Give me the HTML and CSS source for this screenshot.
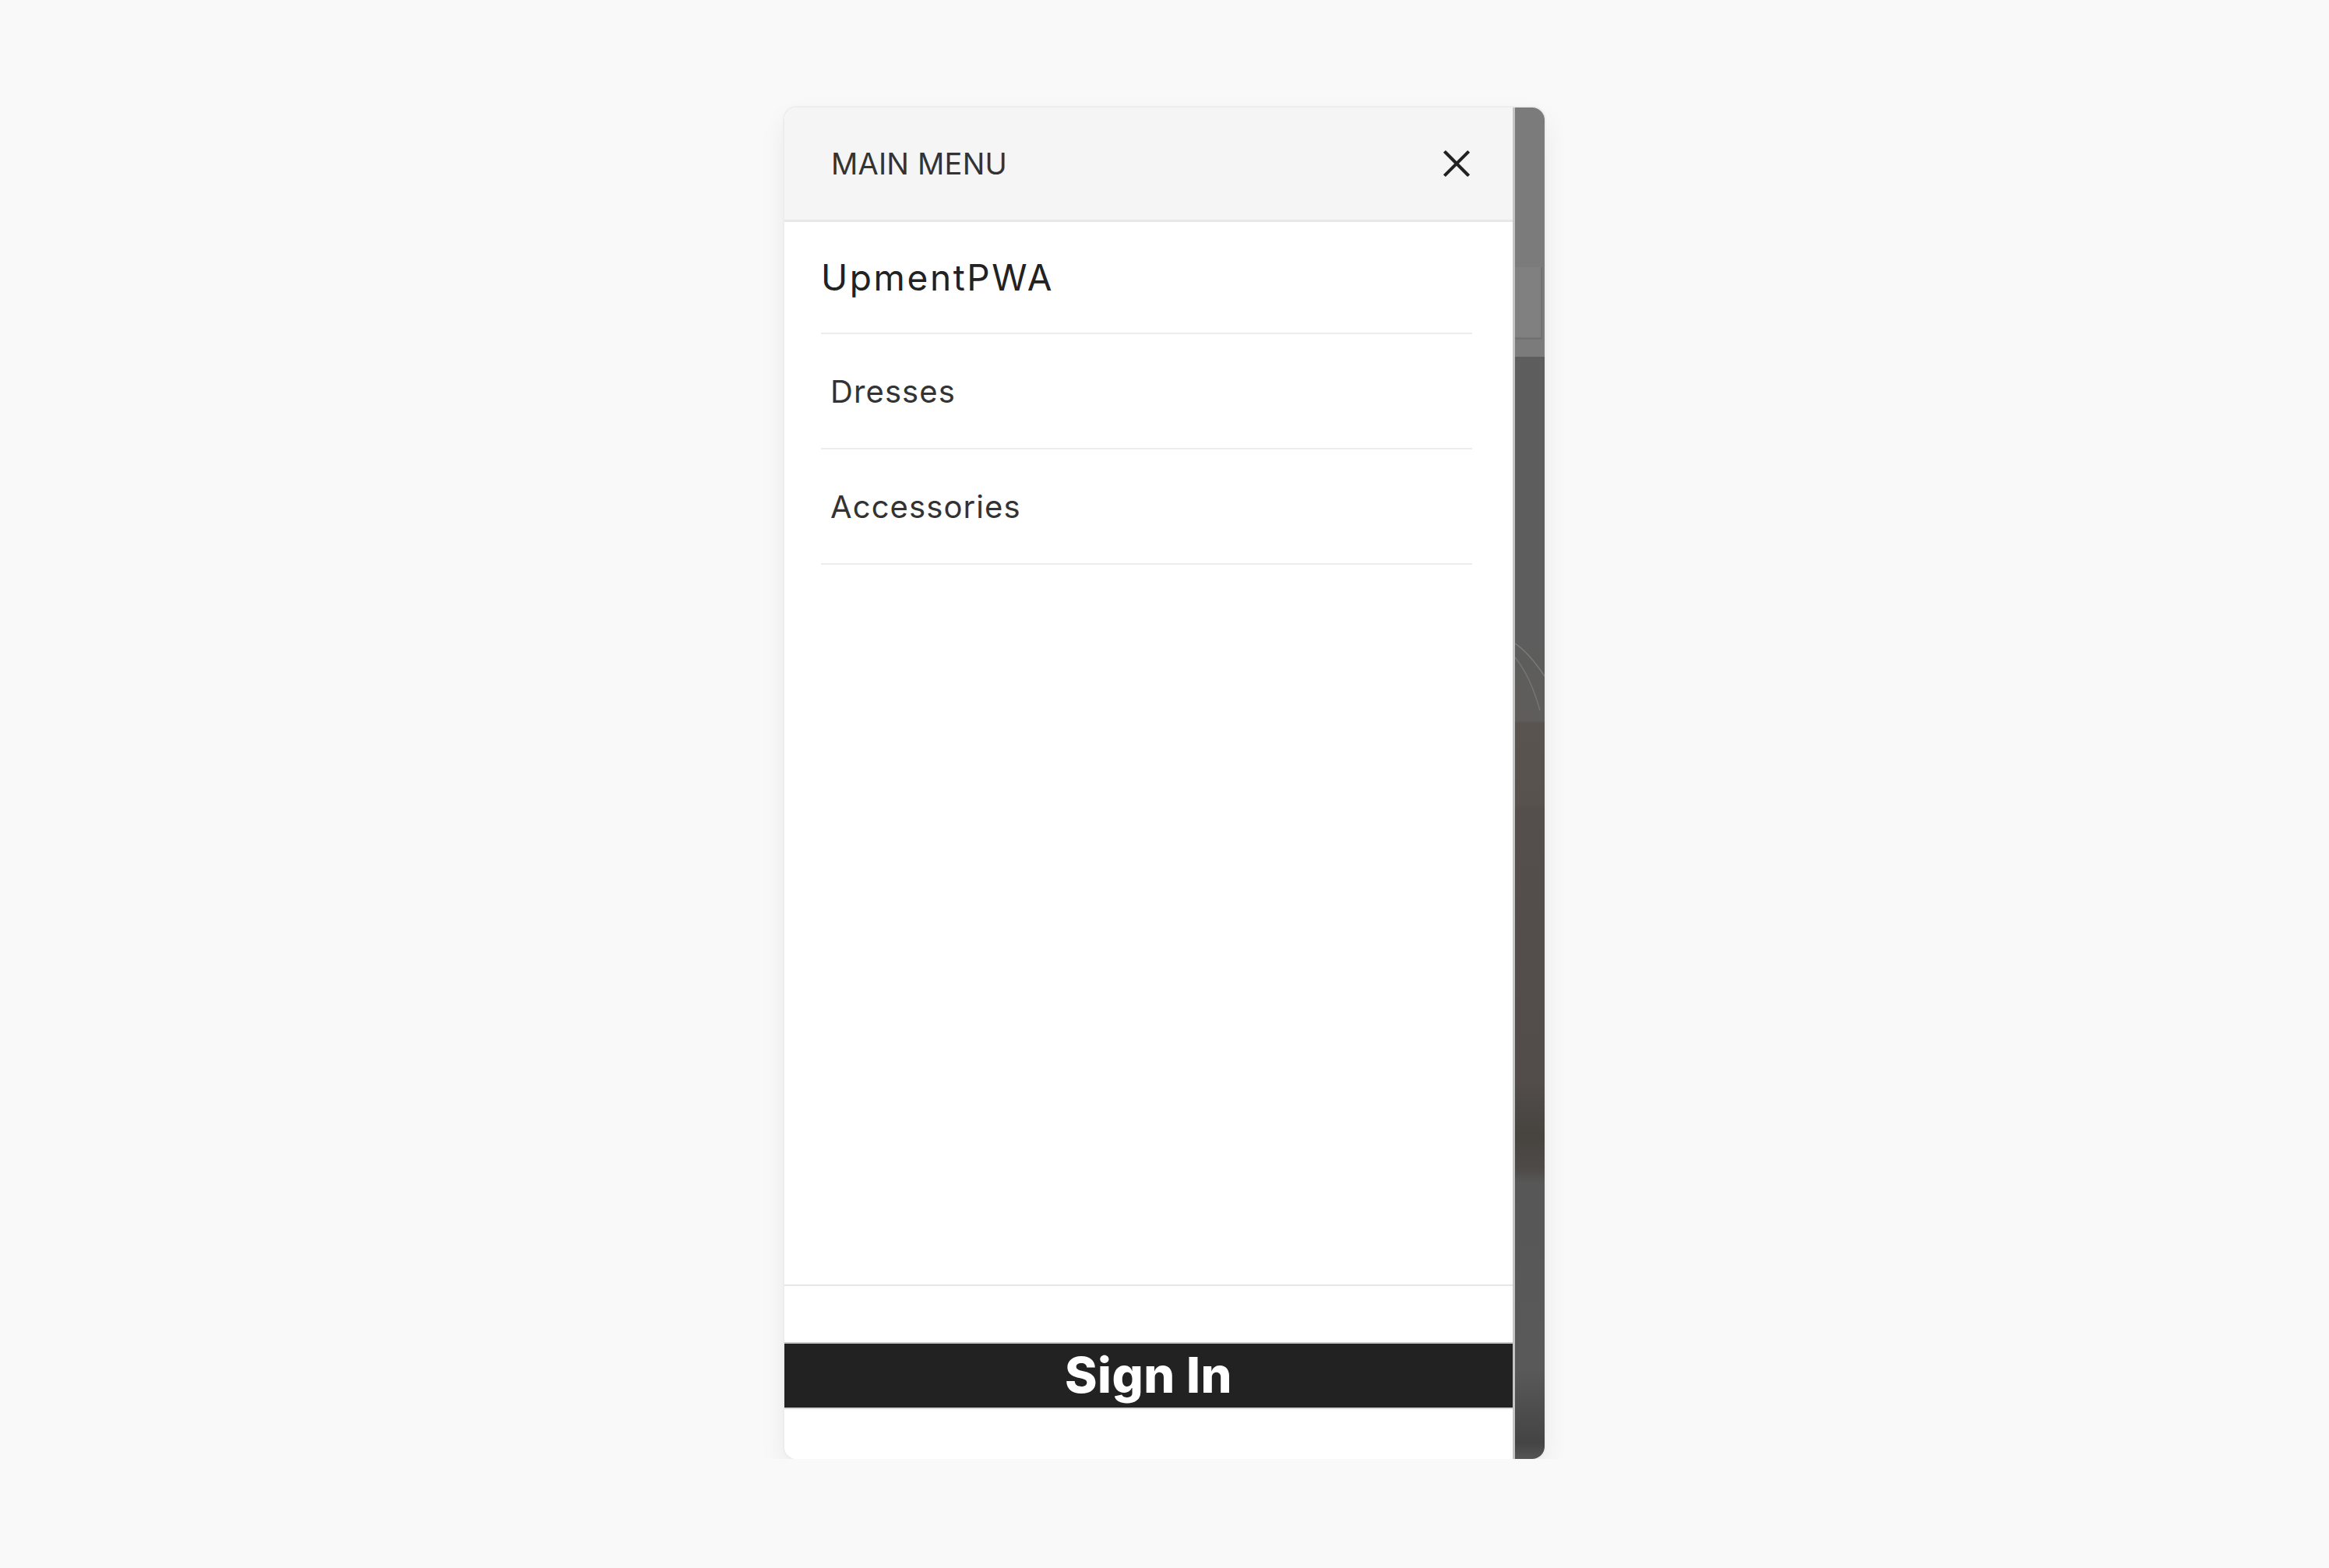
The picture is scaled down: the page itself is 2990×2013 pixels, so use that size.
FILE: index.html
```html
<!DOCTYPE html>
<html lang="en">
<head>
    <meta charset="UTF-8">
    <meta name="viewport" content="width=device-width, initial-scale=1.0">
    <title>UpmentPWA - Menu</title>
    <link rel="stylesheet" href="styles.css">
</head>
<body>

    <div class="screen">

        <aside class="drawer">

            <header class="drawer-head">
                <span class="drawer-title">MAIN MENU</span>
                <button class="close" aria-label="Close">
                    <svg viewBox="0 0 24 24" width="40" height="40">
                        <path d="M3.5 3.5 L20.5 20.5 M20.5 3.5 L3.5 20.5" stroke="#222" stroke-width="2.5" fill="none" stroke-linecap="square"/>
                    </svg>
                </button>
            </header>

            <nav class="drawer-nav">
                <div class="store">UpmentPWA</div>
                <a class="category" href="#">Dresses</a>
                <a class="category" href="#">Accessories</a>
            </nav>

            <footer class="drawer-foot">
                <button class="sign-in">Sign In</button>
            </footer>

        </aside>

        <!-- page behind the drawer, dimmed -->
        <div class="backdrop">
            <div class="bd-header">
                <div class="bd-search"></div>
            </div>
            <div class="bd-hero">
                <svg class="bd-lines" viewBox="0 0 38 120" preserveAspectRatio="none">
                    <path d="M0 10 C12 18 26 34 38 52" stroke="#7a7a7a" stroke-width="1.5" fill="none"/>
                    <path d="M0 28 C10 40 22 60 32 96" stroke="#747474" stroke-width="1.5" fill="none"/>
                </svg>
            </div>
        </div>

    </div>

</body>
</html>
```

FILE: styles.css
```css
body{
    margin: 0;
    background-color: #f9f9f9;
    font-family: Inter, "Noto Sans", sans-serif;
    padding-top: 138px;
}
.screen{
    width: 976px;
    height: 1735px;
    margin: 0 auto;
    display: flex;
    border-radius: 16px;
    overflow: hidden;
    background-color: white;
    box-shadow: 0 0 0 2px #ededed, 0 14px 34px rgba(0, 0, 0, 0.07);
}

/* drawer */
.drawer{
    flex: 0 0 935px;
    display: flex;
    flex-direction: column;
    border-right: 3px solid #c4c4c4;
    background-color: white;
}
.drawer-head{
    height: 144px;
    display: flex;
    align-items: center;
    justify-content: space-between;
    padding: 0 52px 0 60px;
    background-color: #f5f5f5;
    border-bottom: 3px solid #e8e8e8;
}
.drawer-title{
    font-size: 38px;
    font-weight: 400;
    color: #333;
    letter-spacing: 0.2px;
}
.close{
    border: none;
    background: none;
    padding: 0;
    width: 40px;
    height: 40px;
    cursor: pointer;
}
.close svg{
    display: block;
}
.drawer-nav{
    flex: 1;
    display: flex;
    flex-direction: column;
    padding: 0 52px 0 47px;
}
.store{
    height: 142px;
    display: flex;
    align-items: center;
    font-size: 46px;
    color: #222;
    letter-spacing: 2.6px;
    border-bottom: 2px solid #ececec;
}
.category{
    height: 146px;
    display: flex;
    align-items: center;
    padding-left: 12px;
    font-size: 40px;
    font-weight: 400;
    color: #333;
    text-decoration: none;
    letter-spacing: 1.1px;
    border-bottom: 2px solid #ececec;
}
.drawer-foot{
    height: 224px;
    border-top: 2px solid #e6e6e6;
    padding-top: 72px;
    box-sizing: border-box;
}
.sign-in{
    display: block;
    width: 100%;
    height: 86px;
    border: none;
    border-top: 2px solid #c8c8c8;
    border-bottom: 2px solid #d8d8d8;
    background-color: #222;
    color: white;
    font-family: Inter, "Noto Sans", sans-serif;
    font-size: 63px;
    font-weight: 800;
    line-height: 80px;
    letter-spacing: 0.5px;
    padding: 0 0 4px;
    cursor: pointer;
}

/* dimmed page */
.backdrop{
    flex: 1;
    display: flex;
    flex-direction: column;
}
.bd-header{
    height: 320px;
    background-color: #7b7b7b;
    padding-top: 205px;
    box-sizing: border-box;
}
.bd-search{
    height: 93px;
    margin-right: 3px;
    background-color: #808080;
    border-right: 2px solid #727272;
    border-bottom: 3px solid #727272;
    box-sizing: border-box;
}
.bd-hero{
    flex: 1;
    position: relative;
    background: linear-gradient(to bottom,
        #5d5d5d 0px, #5d5d5d 368px,
        #5f5d5c 467px, #5a5450 470px,
        #57524e 575px, #544f4c 580px,
        #524d4a 930px, #47433f 1000px,
        #4d4a48 1042px, #575757 1060px,
        #595959 1300px, #444 1394px, #555 1415px);
}
.bd-lines{
    position: absolute;
    left: 0;
    top: 358px;
    width: 100%;
    height: 120px;
}
```
